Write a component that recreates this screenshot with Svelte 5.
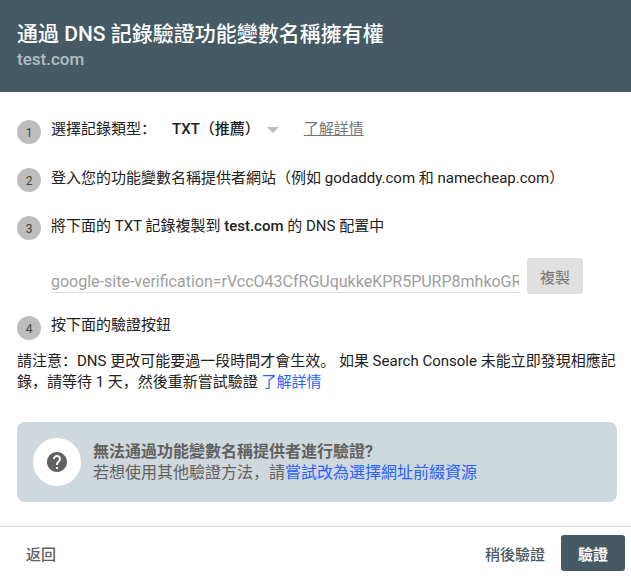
<script lang="ts">
	const token = 'google-site-verification=rVccO43CfRGUqukkeKPR5PURP8mhkoGRzQ2wXn';
</script>

<div class="dialog">
	<header class="head">
		<h1>通過 DNS 記錄驗證功能變數名稱擁有權</h1>
		<div class="domain">test.com</div>
	</header>

	<main class="body">
		<div class="step first">
			<span class="num">1</span>
			<span class="label">選擇記錄類型：</span>
			<span class="select">TXT（推薦）<i class="arrow"></i></span>
			<span class="more">了解詳情</span>
		</div>
		<div class="step second">
			<span class="num">2</span>
			<span class="label">登入您的功能變數名稱提供者網站（例如 godaddy.com 和 namecheap.com）</span>
		</div>
		<div class="step third">
			<span class="num">3</span>
			<span class="label">將下面的 TXT 記錄複製到 <b>test.com</b> 的 DNS 配置中</span>
		</div>
		<div class="token-row">
			<div class="token">{token}</div>
			<button class="copy">複製</button>
		</div>
		<div class="step fourth">
			<span class="num">4</span>
			<span class="label">按下面的驗證按鈕</span>
		</div>
		<p class="note">
			請注意：DNS 更改可能要過一段時間才會生效。 如果 Search Console 未能立即發現相應記錄，請等待 1 天，然後重新嘗試驗證 <span class="link">了解詳情</span>
		</p>
		<div class="help">
			<div class="help-icon">
				<svg width="24" height="24" viewBox="0 0 24 24"><path fill="#616161" d="M12 2C6.48 2 2 6.48 2 12s4.48 10 10 10 10-4.48 10-10S17.52 2 12 2zm1 17h-2v-2h2v2zm2.07-7.75l-.9.92C13.45 12.9 13 13.5 13 15h-2v-.5c0-1.1.45-2.1 1.17-2.83l1.24-1.26c.37-.36.59-.86.59-1.41 0-1.1-.9-2-2-2s-2 .9-2 2H8c0-2.21 1.79-4 4-4s4 1.79 4 4c0 .88-.36 1.68-.93 2.25z"/></svg>
			</div>
			<div class="help-text">
				<div class="help-title">無法通過功能變數名稱提供者進行驗證?</div>
				<div>若想使用其他驗證方法，請<span class="link">嘗試改為選擇網址前綴資源</span></div>
			</div>
		</div>
	</main>

	<footer class="foot">
		<button class="text back">返回</button>
		<div class="actions">
			<button class="text later">稍後驗證</button>
			<button class="verify">驗證</button>
		</div>
	</footer>
</div>

<style>
	:global(body) {
		background: #fff;
	}

	* {
		box-sizing: border-box;
		margin: 0;
		padding: 0;
	}

	.dialog {
		width: 631px;
		height: 579px;
		display: flex;
		flex-direction: column;
		overflow: hidden;
		font-family: Roboto, 'Noto Sans CJK SC', sans-serif;
		font-size: 15px;
		color: #212121;
		background: #fff;
	}

	.head {
		height: 92px;
		padding: 19px 17px 0;
		background: #455a64;
	}

	h1 {
		font-size: 21px;
		line-height: 30px;
		font-weight: 500;
		color: #fff;
	}

	.domain {
		font-size: 17px;
		line-height: 20px;
		font-weight: 500;
		color: #b0bec5;
	}

	.body {
		flex: 1;
		padding: 0 14px 0 17px;
	}

	.step {
		display: flex;
		align-items: flex-start;
	}

	.first {
		margin-top: 25px;
	}

	.second,
	.third {
		margin-top: 21px;
	}

	.second .label,
	.third .label {
		padding-top: 1px;
	}

	.fourth {
		margin-top: 19px;
	}

	.num {
		flex: none;
		width: 24px;
		height: 24px;
		margin: 3px 10px 0 0;
		border-radius: 50%;
		background: #bdbdbd;
		font-size: 12px;
		line-height: 26px;
		text-align: center;
		color: #424242;
	}

	.label {
		line-height: 24px;
		white-space: nowrap;
	}

	b {
		font-weight: 500;
	}

	.select {
		display: flex;
		align-items: center;
		margin-left: 16px;
		font-weight: 500;
		line-height: 24px;
	}

	.arrow {
		width: 0;
		height: 0;
		margin: 2px 0 0 7px;
		border-left: 6px solid transparent;
		border-right: 6px solid transparent;
		border-top: 6px solid #bdbdbd;
	}

	.more {
		margin-left: 25px;
		line-height: 24px;
		color: #757575;
		text-decoration: underline;
	}

	.token-row {
		display: flex;
		align-items: flex-start;
		margin: 18px 0 0 34px;
	}

	.token {
		width: 468px;
		height: 35px;
		overflow: hidden;
		white-space: nowrap;
		border-bottom: 1px solid #e0e0e0;
		font-size: 16px;
		line-height: 48px;
		color: #9e9e9e;
	}

	.copy {
		width: 56px;
		height: 36px;
		margin: 0 0 0 8px;
		border: 0;
		border-radius: 3px;
		background: #e0e0e0;
		font: 400 15px Roboto, 'Noto Sans CJK SC', sans-serif;
		color: #757575;
	}

	.note {
		margin-top: 11px;
		line-height: 21px;
	}

	.link {
		color: #2962ff;
	}

	.help {
		display: flex;
		align-items: center;
		height: 80px;
		margin-top: 29px;
		padding-left: 16px;
		border-radius: 8px;
		background: #cfd8dc;
		font-size: 16px;
		line-height: 21px;
		color: #616161;
	}

	.help-icon {
		flex: none;
		width: 48px;
		height: 48px;
		display: flex;
		align-items: center;
		justify-content: center;
		margin-right: 12px;
		border-radius: 50%;
		background: #fff;
	}

	.help-title {
		font-weight: 700;
	}

	.foot {
		display: flex;
		align-items: center;
		justify-content: space-between;
		height: 53px;
		padding: 0 6px 0 10px;
		border-top: 1px solid #e0e0e0;
		box-shadow: 0 -2px 4px rgba(0, 0, 0, 0.05);
	}

	.actions {
		display: flex;
		align-items: center;
	}

	button {
		cursor: pointer;
	}

	.text {
		border: 0;
		background: none;
		padding: 0 16px;
		font: 500 15px Roboto, 'Noto Sans CJK SC', sans-serif;
		color: #616161;
	}

	.later {
		color: #455a64;
		padding-right: 16px;
	}

	.verify {
		width: 64px;
		height: 36px;
		border: 0;
		border-radius: 3px;
		background: #455a64;
		font: 700 15px Roboto, 'Noto Sans CJK SC', sans-serif;
		color: #fff;
	}
</style>
